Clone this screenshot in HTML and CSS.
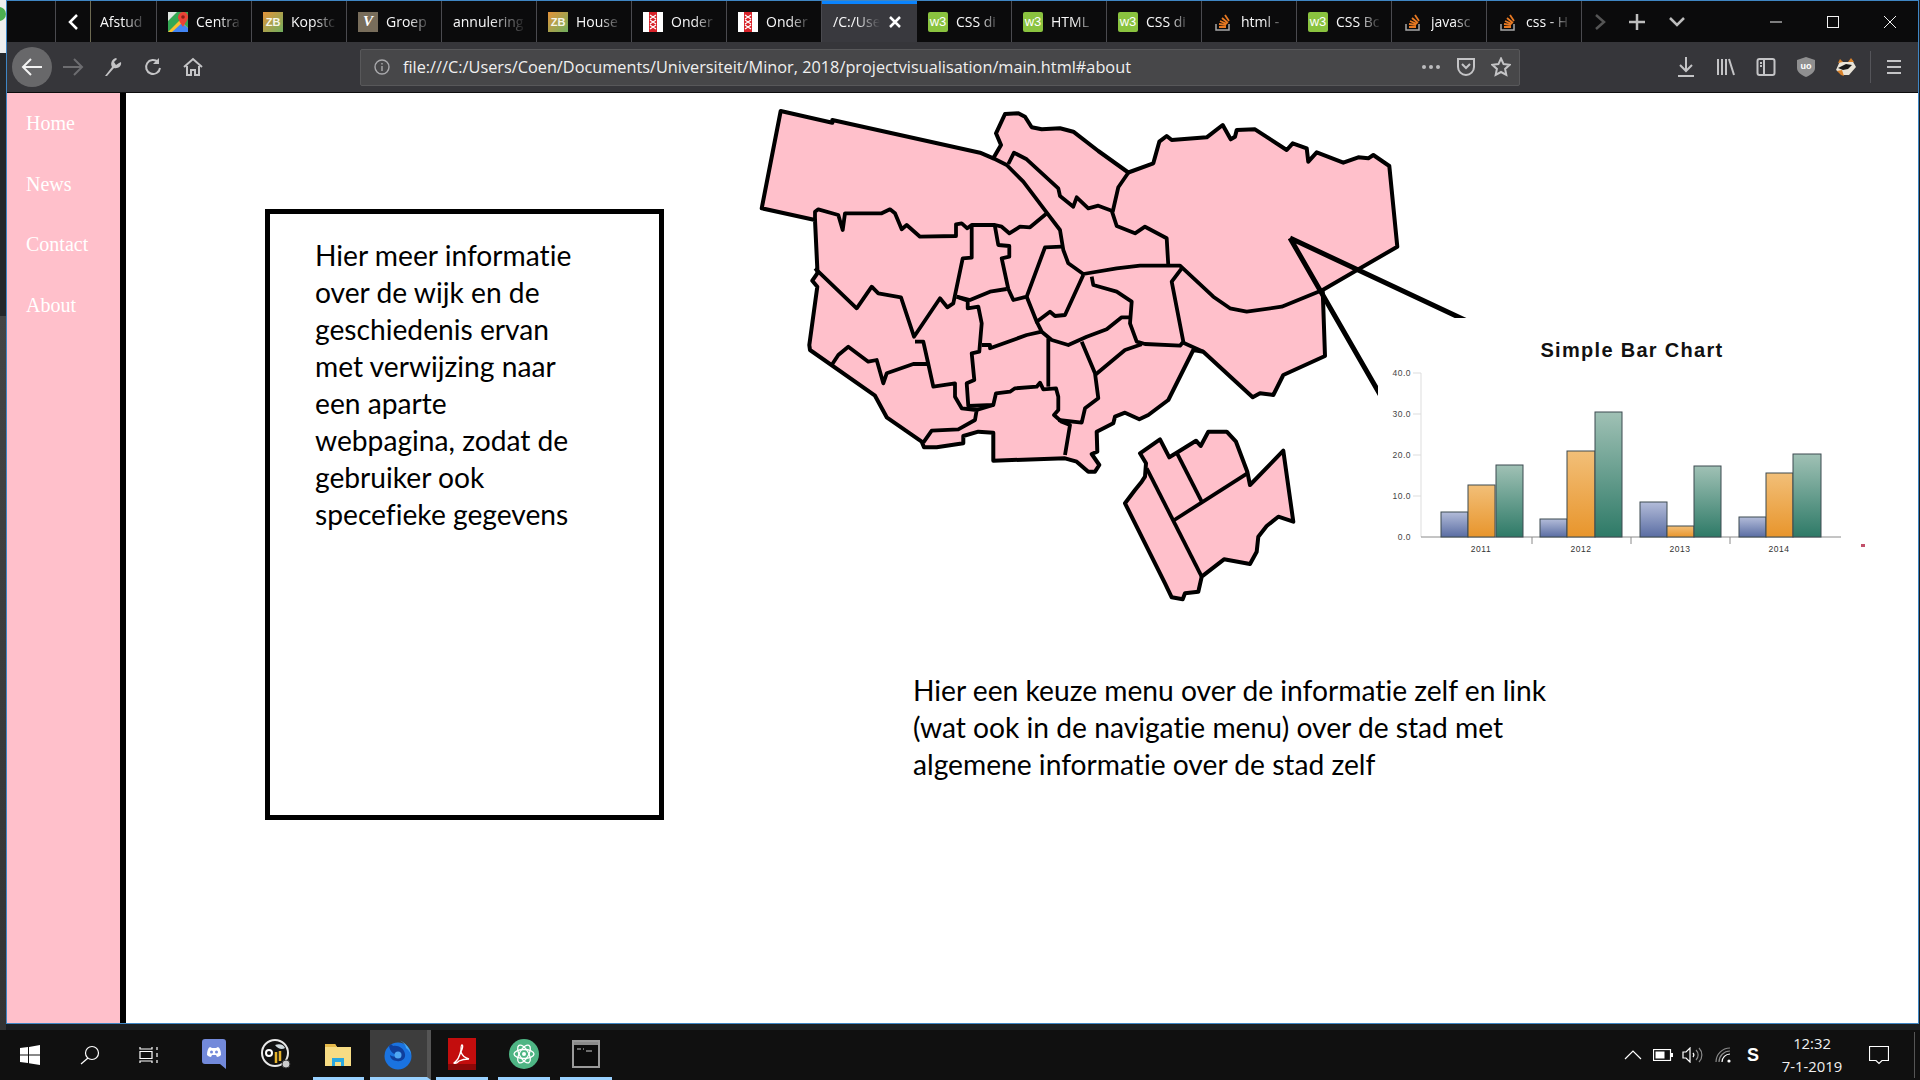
FILE: index.html
```html
<!DOCTYPE html>
<html>
<head>
    <meta charset="utf-8">
    <title>projectvisualisation</title>
    <link rel="stylesheet" href="styles.css">
</head>
<body>
<div class="screen">
    <div class="desk-left"><span class="desk-blob"></span></div>
    <div class="window">
        <!-- tabs -->
        <div class="tabbar">
            <div class="tab-space"></div>
            <div class="tab-scroll"><svg width="14" height="18" viewBox="0 0 14 18"><path d="M11 2 4 9l7 7" class="ic-white"/></svg></div>
            <div class="tab tab-cut"><span class="tab-title">Afstud</span></div>
            <div class="tab">
                <svg class="fav" viewBox="0 0 20 20"><rect width="20" height="20" fill="#34a853"/><path d="M0 20 12 8l8 8v4z" fill="#fbc02d"/><path d="M4 20 14 11l6 5v4z" fill="#4285f4"/><path d="M0 0h9L0 9z" fill="#dfe6e0"/><path d="M15 0c3 0 5 2 5 5 0 3-3 6-5 10-2-3-4-6-5-9 0-3 2-6 5-6z" fill="#ea4335"/><circle cx="15" cy="5" r="1.800" fill="#8a1f17"/></svg>
                <span class="tab-title">Centra</span>
            </div>
            <div class="tab"><span class="fav fav-zb">ZB</span><span class="tab-title">Kopstc</span></div>
            <div class="tab"><span class="fav fav-v">V</span><span class="tab-title">Groep</span></div>
            <div class="tab tab-plain"><span class="tab-title">annulering</span></div>
            <div class="tab"><span class="fav fav-zb">ZB</span><span class="tab-title">House</span></div>
            <div class="tab">
                <svg class="fav" viewBox="0 0 20 20"><rect width="20" height="20" fill="#fff"/><rect x="6" width="8" height="20" fill="#d8232a"/><path d="M7 3l6 4M13 3 7 7M7 8l6 4m0-4-6 4M7 13l6 4m0-4-6 4" class="ic-cross"/></svg>
                <span class="tab-title">Onder</span>
            </div>
            <div class="tab">
                <svg class="fav" viewBox="0 0 20 20"><rect width="20" height="20" fill="#fff"/><rect x="6" width="8" height="20" fill="#d8232a"/><path d="M7 3l6 4M13 3 7 7M7 8l6 4m0-4-6 4M7 13l6 4m0-4-6 4" class="ic-cross"/></svg>
                <span class="tab-title">Onder</span>
            </div>
            <div class="tab tab-on">
                <span class="tab-title">/C:/Use</span>
                <svg width="14" height="14" viewBox="0 0 14 14"><path d="M2 2l10 10M12 2 2 12" class="ic-white"/></svg>
            </div>
            <div class="tab"><span class="fav fav-w3">w3</span><span class="tab-title">CSS di</span></div>
            <div class="tab"><span class="fav fav-w3">w3</span><span class="tab-title">HTML</span></div>
            <div class="tab"><span class="fav fav-w3">w3</span><span class="tab-title">CSS di</span></div>
            <div class="tab">
                <svg class="fav" viewBox="0 0 20 20"><path d="M3 12v6h13v-6" class="ic-so-tray"/><path d="M6 15h7M6 12l7 1M7 9l7 3M9 6l6 5M12 3l4 6" class="ic-so"/></svg>
                <span class="tab-title">html -</span>
            </div>
            <div class="tab"><span class="fav fav-w3">w3</span><span class="tab-title">CSS Bc</span></div>
            <div class="tab">
                <svg class="fav" viewBox="0 0 20 20"><path d="M3 12v6h13v-6" class="ic-so-tray"/><path d="M6 15h7M6 12l7 1M7 9l7 3M9 6l6 5M12 3l4 6" class="ic-so"/></svg>
                <span class="tab-title">javasc</span>
            </div>
            <div class="tab">
                <svg class="fav" viewBox="0 0 20 20"><path d="M3 12v6h13v-6" class="ic-so-tray"/><path d="M6 15h7M6 12l7 1M7 9l7 3M9 6l6 5M12 3l4 6" class="ic-so"/></svg>
                <span class="tab-title">css - H</span>
            </div>
            <div class="tab-btn tab-btn-a"><svg width="12" height="18" viewBox="0 0 12 18"><path d="M2 2l8 7-8 7" class="ic-dim"/></svg></div>
            <div class="tab-btn tab-btn-b"><svg width="18" height="18" viewBox="0 0 18 18"><path d="M9 1v16M1 9h16" class="ic-grey"/></svg></div>
            <div class="tab-btn tab-btn-c"><svg width="16" height="10" viewBox="0 0 16 10"><path d="M1 1l7 7 7-7" class="ic-grey"/></svg></div>
            <div class="win-btns">
                <div class="win-btn"><svg width="12" height="12" viewBox="0 0 12 12"><path d="M0 6h12" class="ic-thin"/></svg></div>
                <div class="win-btn"><svg width="12" height="12" viewBox="0 0 12 12"><rect x=".5" y=".5" width="11" height="11" class="ic-thin"/></svg></div>
                <div class="win-btn"><svg width="14" height="14" viewBox="0 0 14 14"><path d="M1 1l12 12M13 1 1 13" class="ic-thin"/></svg></div>
            </div>
        </div>

        <!-- toolbar -->
        <div class="toolbar">
            <div class="tool tool-back"><svg width="22" height="20" viewBox="0 0 22 20"><path d="M10 2 2 10l8 8M2 10h19" class="ic-light"/></svg></div>
            <div class="tool"><svg width="22" height="20" viewBox="0 0 22 20"><path d="M12 2l8 8-8 8M20 10H1" class="ic-off"/></svg></div>
            <div class="tool"><svg width="20" height="20" viewBox="0 0 20 20"><path d="M2 19l7-9C7 6 9 2 13 1l1 1-3 3 2 3 3-2 2-1c1 4-3 7-7 6l-7 8z" class="ic-fill"/></svg></div>
            <div class="tool"><svg width="20" height="20" viewBox="0 0 20 20"><path d="M17 11a7 7 0 1 1-2-6" class="ic-tool"/><path d="M16 1v6h-6z" class="ic-fill"/></svg></div>
            <div class="tool"><svg width="20" height="20" viewBox="0 0 20 20"><path d="M1 10l9-8 9 8M4 9v9h4v-5h4v5h4V9" class="ic-tool"/></svg></div>
            <div class="urlbar">
                <svg class="url-info" width="16" height="16" viewBox="0 0 16 16"><circle cx="8" cy="8" r="7" class="ic-url"/><path d="M8 7v5M8 4v1.5" class="ic-url"/></svg>
                <span class="url-text">file:///C:/Users/Coen/Documents/Universiteit/Minor, 2018/projectvisualisation/main.html#about</span>
                <div class="url-actions">
                    <div class="url-btn"><svg width="20" height="6" viewBox="0 0 20 6"><circle cx="3" cy="3" r="2" class="ic-dot"/><circle cx="10" cy="3" r="2" class="ic-dot"/><circle cx="17" cy="3" r="2" class="ic-dot"/></svg></div>
                    <div class="url-btn"><svg width="20" height="20" viewBox="0 0 20 20"><path d="M2 2h16v8a8 8 0 0 1-16 0z" class="ic-tool"/><path d="M6 7l4 4 4-4" class="ic-tool"/></svg></div>
                    <div class="url-btn"><svg width="20" height="20" viewBox="0 0 20 20"><path d="M10 1.5l2.6 5.6 6 .7-4.500 4.100 1.200 6L10 15l-5.300 2.900 1.200-6-4.500-4.100 6-.7z" class="ic-tool"/></svg></div>
                </div>
            </div>
            <div class="tool-group">
                <div class="tool"><svg width="20" height="22" viewBox="0 0 20 22"><path d="M10 1v14M4 9l6 6 6-6" class="ic-tool"/><path d="M2 20h16" class="ic-tool"/></svg></div>
                <div class="tool"><svg width="20" height="20" viewBox="0 0 20 20"><path d="M2 2v16M6 2v16M10 2v16M13 2l5 16" class="ic-tool"/></svg></div>
                <div class="tool"><svg width="20" height="20" viewBox="0 0 20 20"><rect x="1.500" y="2" width="17" height="16" rx="2" class="ic-tool"/><path d="M8 2v16M4 6h2M4 9h2" class="ic-tool"/></svg></div>
                <div class="tool"><svg width="18" height="20" viewBox="0 0 18 20"><path d="M9 0l9 3v8c0 4-4 7-9 9-5-2-9-5-9-9V3z" fill="#8f8f90"/><text x="9" y="12" class="ublock-text">uo</text></svg></div>
                <div class="tool"><svg width="22" height="20" viewBox="0 0 22 20"><path d="M1 13 5 4l3 1h6l3-2 4 7-7 8H8z" fill="#e9e4d8"/><path d="M3 6l2-4 3 3zM19 5l-3-4-3 4z" fill="#d9822b"/><path d="M3 11l8-4 6 1-4 4-5 1z" fill="#1a1a1a"/><path d="M2 14l4 4 3 1-2-6z" fill="#d9822b"/></svg></div>
                <div class="tool-sep"></div>
                <div class="tool"><svg width="16" height="16" viewBox="0 0 16 16"><path d="M1 2h14M1 8h14M1 14h14" class="ic-tool"/></svg></div>
            </div>
        </div>

        <!-- the page itself -->
        <div class="page">
            <div class="sidenav">
                <a class="nav-link">Home</a>
                <a class="nav-link">News</a>
                <a class="nav-link">Contact</a>
                <a class="nav-link">About</a>
            </div>
            <div class="main">
                <div class="info-box">Hier meer informatie over de wijk en de geschiedenis ervan met verwijzing naar een aparte webpagina, zodat de gebruiker ook specefieke gegevens</div>
                <div class="map-col">
                    <svg class="map" width="760" height="517" viewBox="740 93 760 517">
                        <g class="wijk">
                            <path d="M780.700 111 832.300 122.700V120L980 152.700 993.300 158.300 1001 145 996 133.300 1005 114 1018.300 113.300 1025 116.700 1031.700 127.300 1041.700 129.300 1060 128.300 1073.300 131.700 1098.300 151 1128.300 172.500 1153.300 163.300 1159.300 141.700 1166.700 136 1171.700 140 1206.700 137.300 1222.700 125 1230.700 139.300 1235 136.700 1236.700 130 1255 129.300 1286.700 150 1292.700 143.300 1306.700 148.300 1308.300 161.700 1316.700 152.300 1343.300 162.700 1358.300 157.300 1368.300 158.300 1373.300 155 1389.300 166 1397.300 246.700 1322.700 290 1325 356 1283.300 375 1273.300 395 1260 393.300 1252.700 397.300 1203.300 351.700 1193.300 350 1178.300 380 1168.300 400 1148.300 415 1139.300 419.300 1125 412.700 1115 416.700 1113.300 423.300 1096.700 431.700 1097.300 451.700 1091.700 454 1099.300 465 1095 471.700 1088.300 471.700 1076.700 461.700 1065 458.300 993.300 460.700V432.700L978.300 431.700 963.300 436V443.300L936.700 447.300H924L921.700 441.700 886.700 417.300 875 395.700 810 350 809.300 345 817.300 286.700 812.300 280.700 817.300 273.300V268.300L815 220 761.700 208.300Z"/>
                            <path d="M1140 453.300 1160 439.300 1169.300 457.300 1178.300 451.700 1196 440.700 1200.700 446 1208.300 431.700H1226.700L1236 441.700 1247.300 471.700 1250 485 1283.300 450.700 1293.300 521.700 1278.300 516.700 1266.700 526 1258.300 536.700 1256.700 551.700 1250 564 1224 559.300 1201.700 576.700 1198.300 591.700 1185 593.300 1182.700 599.300 1171.700 597.300 1165 583.300 1125 503.300 1135 490 1141.700 481.700 1145 476.700 1146 463.300Z"/>
                        </g>
                        <g class="grens">
                            <path d="M815 220V211.700L818.300 209.300 838.300 215 842.700 230 845 213.300H881.700L890 209.300 895 213.300 901.700 229.300 906.700 225 920 236.700 956 236V224.300L961.700 223.300 967.300 228.300 971.700 225H995L1001.700 226.700 1009.300 233.300 1020 226.700 1030 227.300 1046 214"/>
                            <path d="M993.300 158.300 1006.700 165 1023.300 181.700 1046 211.700 1060 230 1063.300 250 1068.300 263.300 1083.300 274 1116.700 268.300 1140 265.700 1180 265.700 1213.300 296.700 1230 308.300 1246.700 311.700 1281.700 306.700 1322.700 290"/>
                            <path d="M1008.300 164 1014 152.700 1026.700 159.300 1058.300 188.300 1060 196 1073.300 206.700 1076.700 197.300 1088.300 208.300 1098.300 205.700 1111.700 210.700 1116.700 226 1135 233.300 1145 226.700 1166.700 238.300 1168.300 265.700"/>
                            <path d="M1112.700 211.700 1118.300 187.300 1128.300 172.700"/>
                            <path d="M815 268.300 856.700 308.300 871.700 286.700 878.300 293.300 901 297.300 914 336.700 940 298.300 947.300 307.300 953.300 303.300 962.700 258.300 971.700 257.700V225"/>
                            <path d="M995 226.700 998.300 245 1009.300 246V256.700L1001.700 258.300 1008.300 289 1013.300 300 1026.700 296.700 1045 247.300 1061.700 246.700"/>
                            <path d="M956.700 296.700 970 300 990 291.700 1006.700 289"/>
                            <path d="M1026.700 296.700 1036.700 321.700 1050 311.700 1055 316 1065 315 1083.300 275"/>
                            <path d="M1036.700 321.700 1041.700 331.700 1051.700 340 1068.300 345 1086.700 336.700 1106.700 329.300 1121.700 317.300H1130"/>
                            <path d="M1091.700 276.700 1093.300 285 1116.700 291.700 1131.700 301.700 1130 323.300 1136.700 341.700 1145 344 1180 345.700 1183.300 341.700 1171.700 281.700 1181.700 268.300"/>
                            <path d="M1183.300 342.700 1203.300 351.700"/>
                            <path d="M1095 375 1125 350 1141.700 344.300"/>
                            <path d="M915 341.700H923.300L928.300 364 933.300 386.700 955 383.300V396.700L961.700 408.300 976.700 410 975 420 958.300 429.300 931.700 430.700 923.300 442.700"/>
                            <path d="M831.700 365 838.300 355 848.300 346.700 868.300 361.700 876.700 360 883.300 383.300 886.700 373.300 913.300 364H928.300"/>
                            <path d="M956.700 296.700 967.700 300.700V308.300L978.300 306.700 981.700 323.300 979.300 351.700 971.700 353.300 974.300 380 966.700 383.300 968.300 406 993.300 405 996 393.300 1010 391.700 1015 388.300 1036.700 386.700 1040 382.700 1043.300 389.300 1056 388.300 1058.300 396.700V410L1054 415 1061.700 421.700 1070 425 1065 455"/>
                            <path d="M976.700 410 993.300 405"/>
                            <path d="M981.700 345H990V348.300L1026.700 335 1041.700 331.700"/>
                            <path d="M1048.300 338.300V386.700"/>
                            <path d="M1058.300 420 1081.700 422.700 1085 408.300 1098.300 398.300 1095 373.300 1081.700 341.700"/>
                            <path d="M1146.700 468.300 1201.700 576.700"/>
                            <path d="M1174.300 520 1247.300 473.300"/>
                            <path d="M1176.700 452.700 1201.700 501.700"/>
                        </g>
                        <path class="pijl" d="M1290 238 1550 360M1290 238 1420 464"/>
                    </svg>
                    <svg class="chart" width="502" height="250" viewBox="1378 318 502 250">
                        <defs>
                            <linearGradient id="barBlue" x1="0" y1="0" x2="0" y2="1"><stop offset="0" stop-color="#b3bcd9"/><stop offset="1" stop-color="#5a6da3"/></linearGradient>
                            <linearGradient id="barOrange" x1="0" y1="0" x2="0" y2="1"><stop offset="0" stop-color="#f2bf78"/><stop offset="1" stop-color="#e8952c"/></linearGradient>
                            <linearGradient id="barGreen" x1="0" y1="0" x2="0" y2="1"><stop offset="0" stop-color="#a0c1b5"/><stop offset="1" stop-color="#2e7a67"/></linearGradient>
                        </defs>
                        <text x="1632" y="357" class="chart-title">Simple Bar Chart</text>
                        <path d="M1413 373h8M1413 414h8M1413 455h8M1413 496h8M1421 373v164" class="axis-light"/>
                        <path d="M1421 537H1841M1532 537v7M1631 537v7M1730 537v7" class="axis"/>
                        <text x="1411" y="376" class="tick-y">40.0</text>
                        <text x="1411" y="417" class="tick-y">30.0</text>
                        <text x="1411" y="458" class="tick-y">20.0</text>
                        <text x="1411" y="499" class="tick-y">10.0</text>
                        <text x="1411" y="540" class="tick-y">0.0</text>
                        <text x="1481" y="552" class="tick-x">2011</text>
                        <text x="1581" y="552" class="tick-x">2012</text>
                        <text x="1680" y="552" class="tick-x">2013</text>
                        <text x="1779" y="552" class="tick-x">2014</text>
                        <g class="bars">
                            <rect x="1441" y="512" width="27" height="25" fill="url(#barBlue)"/>
                            <rect x="1468" y="485" width="27" height="52" fill="url(#barOrange)"/>
                            <rect x="1496" y="465" width="27" height="72" fill="url(#barGreen)"/>
                            <rect x="1540" y="519" width="27" height="18" fill="url(#barBlue)"/>
                            <rect x="1567" y="451" width="28" height="86" fill="url(#barOrange)"/>
                            <rect x="1595" y="412" width="27" height="125" fill="url(#barGreen)"/>
                            <rect x="1640" y="502" width="27" height="35" fill="url(#barBlue)"/>
                            <rect x="1667" y="526" width="27" height="11" fill="url(#barOrange)"/>
                            <rect x="1694" y="466" width="27" height="71" fill="url(#barGreen)"/>
                            <rect x="1739" y="517" width="27" height="20" fill="url(#barBlue)"/>
                            <rect x="1766" y="473" width="27" height="64" fill="url(#barOrange)"/>
                            <rect x="1793" y="454" width="28" height="83" fill="url(#barGreen)"/>
                        </g>
                        <rect x="1861" y="544" width="4" height="3" fill="#c2506a"/>
                    </svg>
                    <p class="menu-text">Hier een keuze menu over de informatie zelf en link (wat ook in de navigatie menu) over de stad met algemene informatie over de stad zelf</p>
                </div>
            </div>
        </div>
    </div>
    <div class="desk-right"></div>
</div>

<!-- windows taskbar -->
<div class="taskbar">
    <div class="sys-btn"><svg width="20" height="20" viewBox="0 0 20 20"><path d="M0 3l8-1v7.500H0zM9 1.900 20 0v9.500H9zM0 10.500h8V18l-8-1zM9 10.500h11V20L9 18.200z" fill="#fff"/></svg></div>
    <div class="sys-btn"><svg width="20" height="20" viewBox="0 0 20 20"><circle cx="12" cy="8" r="6.500" class="ic-task"/><path d="M8 13 1 19" class="ic-task"/></svg></div>
    <div class="sys-btn sys-view"><svg width="20" height="20" viewBox="0 0 20 20"><path d="M1 2v2h12V2M1 18v-2h12v2M1 6.500h12v7H1z" class="ic-task"/><path d="M18 2v3M18 8v4M18 15v3" class="ic-task"/></svg></div>
    <div class="task-list">
        <div class="task"><svg width="24" height="30" viewBox="0 0 24 30"><path d="M3 0h18a3 3 0 0 1 3 3v27l-6-5H3a3 3 0 0 1-3-3V3a3 3 0 0 1 3-3z" fill="#7289da"/><path d="M5 16c0-4 1-7 3-8l2 1h4l2-1c2 1 3 4 3 8-1 1-3 2-4 2l-1-2h-4l-1 2c-1 0-3-1-4-2z" fill="#fff"/><circle cx="9.500" cy="13" r="1.500" fill="#7289da"/><circle cx="14.500" cy="13" r="1.500" fill="#7289da"/></svg></div>
        <div class="task"><svg width="30" height="32" viewBox="0 0 30 32"><circle cx="14" cy="15" r="13" fill="#111" stroke="#e8e8e8" stroke-width="2"/><circle cx="8" cy="15" r="4" fill="#fff"/><circle cx="8" cy="15" r="2" fill="#111"/><path d="M14 7c5-2 9 0 10 3-3 2-7 1-10-3z" fill="#cfd8dc"/><path d="M15 14v11M19 13v10" stroke="#e5b22b" stroke-width="2.500"/><circle cx="25" cy="26" r="4" fill="#ccc" stroke="#333"/></svg></div>
        <div class="task"><svg width="28" height="28" viewBox="0 0 28 28"><path d="M1 4h10l2 3h14v19H1z" fill="#f7dc84"/><path d="M1 4h10l2 3H1z" fill="#e5b94a"/><path d="M8 18h12v8h-3v-4h-6v4H8z" fill="#2aa8e0"/></svg></div>
        <div class="task task-on"><svg width="28" height="32" viewBox="0 0 28 32"><circle cx="14" cy="18" r="13.500" fill="#1a73e0"/><path d="M15 2c7 3 12 9 12 16 0-3-2-6-5-8 0-3-3-6-7-8z" fill="#45a9f5"/><path d="M5 8c2-2 3-2 4 0 5-1 11 2 12 8 1 5-4 8-8 7-4 0-7-3-7-6 3 2 7 2 9 0-5 0-9-3-10-9z" fill="#0f3f9c"/><circle cx="14" cy="17" r="3.500" fill="#4fa6f2"/></svg></div>
        <div class="task"><svg width="28" height="32" viewBox="0 0 28 32"><rect width="28" height="32" fill="#c30d0d"/><rect y="26" width="28" height="6" fill="#8c0808"/><path d="M6 25c3-2 6-8 7-13 0-3 0-5 1-5s1 3-1 7c1 3 4 6 8 7-4 0-8 1-10 2-2 2-4 3-5 2z" class="ic-pdf"/></svg></div>
        <div class="task"><svg width="30" height="30" viewBox="0 0 30 30"><circle cx="15" cy="15" r="15" fill="#4eb584"/><g class="ic-atom"><ellipse cx="15" cy="15" rx="10" ry="4.500"/><ellipse cx="15" cy="15" rx="10" ry="4.500" transform="rotate(60 15 15)"/><ellipse cx="15" cy="15" rx="10" ry="4.500" transform="rotate(120 15 15)"/></g><circle cx="15" cy="15" r="2" fill="#fff"/></svg></div>
        <div class="task"><svg width="28" height="28" viewBox="0 0 28 28"><rect x="1" y="1" width="26" height="26" fill="#0c0c0c" stroke="#9a9a9a" stroke-width="2"/><rect x="2" y="2" width="24" height="3" fill="#8a8a8a"/><path d="M5 9h4M11 9h1M14 11h6" stroke="#ccc"/></svg></div>
    </div>
    <div class="tray">
        <div class="tray-item tray-up"><svg width="18" height="10" viewBox="0 0 18 10"><path d="M1 9l8-8 8 8" class="ic-task"/></svg></div>
        <div class="tray-item"><svg width="20" height="12" viewBox="0 0 20 12"><rect x=".5" y=".5" width="17" height="11" class="ic-task"/><rect x="2.500" y="2.500" width="9" height="7" fill="#fff"/><rect x="18" y="4" width="2" height="4" fill="#fff"/></svg></div>
        <div class="tray-item"><svg width="22" height="16" viewBox="0 0 22 16"><path d="M1 5h3l4-4v14l-4-4H1z" class="ic-task"/><path d="M11 6a3 3 0 0 1 0 4" class="ic-task"/><path d="M14 3a7 7 0 0 1 0 10M17 1a10 10 0 0 1 0 14" class="ic-tray-dim"/></svg></div>
        <div class="tray-item"><svg width="17" height="16" viewBox="0 0 17 16"><path d="M1 15A14 14 0 0 1 15 1M4 15A11 11 0 0 1 15 4" class="ic-tray-dim"/><path d="M7 15a8 8 0 0 1 8-8" class="ic-task"/><circle cx="14" cy="14" r="1.600" fill="#fff"/></svg></div>
        <div class="tray-item tray-s">S</div>
        <div class="clock"><span>12:32</span><span>7-1-2019</span></div>
        <div class="tray-item tray-note"><svg width="20" height="20" viewBox="0 0 20 20"><path d="M.5 1.500h19v14H13l-3 3-3-3H.5z" class="ic-task"/></svg></div>
        <div class="show-desk"></div>
    </div>
</div>
</body>
</html>
```

FILE: styles.css
```css
*{box-sizing:border-box;margin:0;padding:0;}
html,body{width:1920px;height:1080px;overflow:hidden;background:#1c1f22;}
svg{display:block;flex:none;}

/* desktop + browser window */
.screen{display:flex;height:1030px;}
.desk-left{width:6px;background:linear-gradient(#eee 0,#eee 53px,#25272a 53px,#25272a 316px,#444 316px,#333 100%);overflow:hidden;}
.desk-blob{display:block;width:14px;height:14px;margin:7px 0 0 -8px;border-radius:50%;background:#4caf50;}
.desk-right{width:1px;background:#1c1f22;}
.window{width:1913px;height:1024px;border:1px solid #3f86c4;display:flex;flex-direction:column;}

.tabbar{height:41px;background:#0b0b0c;display:flex;color:#f9f9fa;font:14px "Open Sans",sans-serif;}
.tab-space{width:49px;border-right:1px solid #4a4a4f;}
.tab-scroll{width:35px;display:flex;align-items:center;justify-content:center;border-right:1px solid #6d6a52;}
.tab{width:95px;flex:none;display:flex;align-items:center;gap:8px;padding:0 9px 0 11px;border-right:1px solid #4a4a4f;}
.tab-cut{width:66px;padding-left:9px;}
.tab-plain{padding-left:11px;}
.tab-on{background:#39393e;border-top:3px solid #0a84ff;border-right:0;padding-right:15px;}
.tab-on svg{margin-top:-3px;}
.tab-on .tab-title{margin-top:-3px;}
.tab-title{flex:1;overflow:hidden;white-space:nowrap;-webkit-mask-image:linear-gradient(to right,#000 50%,transparent 100%);mask-image:linear-gradient(to right,#000 50%,transparent 100%);}
.fav{width:20px;height:20px;flex:none;display:flex;align-items:center;justify-content:center;font-family:"Liberation Sans",sans-serif;}
.fav-zb{background:linear-gradient(135deg,#e5933a,#6fae5e);color:#f5f5e8;font-size:11px;font-weight:bold;}
.fav-v{background:#786d5b;color:#fff;font:italic bold 15px "Liberation Serif",serif;}
.fav-w3{background:#8ac33f;border-radius:2px;color:#fff;font-size:13px;}
.tab-btn{display:flex;align-items:center;justify-content:center;}
.tab-btn-a{width:36px;}
.tab-btn-b{width:38px;}
.tab-btn-c{width:42px;}
.win-btns{margin-left:auto;display:flex;}
.win-btn{width:57px;display:flex;align-items:center;justify-content:center;}

.ic-white{fill:none;stroke:#fff;stroke-width:2.500;}
.ic-cross{fill:none;stroke:#fff;stroke-width:1.200;}
.ic-so{fill:none;stroke:#e87922;stroke-width:1.800;}
.ic-so-tray{fill:none;stroke:#a8a8a8;stroke-width:1.500;}
.ic-dim{fill:none;stroke:#555;stroke-width:2.500;}
.ic-grey{fill:none;stroke:#bdbdbd;stroke-width:2.500;}
.ic-thin{fill:none;stroke:#f2f2f2;stroke-width:1;}
.ic-light{fill:none;stroke:#f2f2f2;stroke-width:2;}
.ic-off{fill:none;stroke:#6d6d70;stroke-width:2;}
.ic-tool{fill:none;stroke:#c4c4c6;stroke-width:2;}
.ic-fill{fill:#c4c4c6;}
.ic-url{fill:none;stroke:#a9a9ac;stroke-width:1.400;}
.ic-dot{fill:#bcbcbe;}
.ublock-text{font:bold 9px "Liberation Sans",sans-serif;fill:#fff;text-anchor:middle;}

.toolbar{height:51px;flex:none;background:#36363a;border-bottom:1px solid #0c0c0d;display:flex;align-items:center;padding-left:5px;}
.tool{width:40px;height:40px;flex:none;display:flex;align-items:center;justify-content:center;}
.tool-back{background:#68686a;border-radius:50%;margin-right:1px;}
.urlbar{width:1160px;height:37px;margin:0 0 0 147px;background:#474749;border:1px solid #58585a;border-radius:2px;display:flex;align-items:center;}
.url-info{margin-left:13px;}
.url-text{margin-left:13px;color:#f0f0f0;font:16.300px "Open Sans",sans-serif;white-space:nowrap;}
.url-actions{margin-left:auto;display:flex;margin-right:1px;}
.url-btn{width:35px;display:flex;justify-content:center;align-items:center;}
.tool-group{display:flex;align-items:center;margin-left:146px;}
.tool-sep{width:1px;height:32px;margin:0 3px 0 4px;background:#55555a;}

/* page */
.page{height:930px;flex:none;background:#fff;display:flex;overflow:hidden;}
.sidenav{width:119px;flex:none;background:#ffc0cb;border-right:6px solid #000;}
.nav-link{display:block;padding:19px 0 18.700px 19px;color:#fff;font:20px/23px "Liberation Serif",serif;}
.main{flex:1;display:flex;align-items:flex-start;}
.info-box{width:399px;height:611px;margin:116px 0 0 139px;padding:23px 70px 0 45px;border:5px solid #000;color:#000;font:28.200px/37px Lato,sans-serif;font-variant-ligatures:none;}
.map-col{position:relative;margin-left:76px;}
.map{overflow:hidden;}
.wijk path{fill:#ffc0cb;stroke:#000;stroke-width:4;stroke-linejoin:round;}
.grens path{fill:none;stroke:#000;stroke-width:3.800;stroke-linejoin:round;}
.pijl{fill:none;stroke:#000;stroke-width:5;}
.chart{position:absolute;left:638px;top:225px;background:#fff;}
.chart-title{font:bold 20px "Liberation Sans",sans-serif;letter-spacing:1.300px;text-anchor:middle;fill:#111;}
.axis-light{fill:none;stroke:#ddd;}
.axis{fill:none;stroke:#8a8a8a;}
.tick-y{font:8.500px "Liberation Sans",sans-serif;letter-spacing:.5px;text-anchor:end;fill:#444;}
.tick-x{font:8.500px "Liberation Sans",sans-serif;letter-spacing:.5px;text-anchor:middle;fill:#333;}
.bars rect{stroke:#3c4a50;stroke-width:1;}
.menu-text{width:660px;margin:62px 0 0 173px;color:#000;font:28.200px/37px Lato,sans-serif;font-variant-ligatures:none;}

/* taskbar */
.taskbar{height:50px;background:#101010;display:flex;align-items:stretch;color:#fff;}
.sys-btn{width:60px;display:flex;align-items:center;justify-content:center;}
.sys-view{width:58px;}
.ic-task{fill:none;stroke:#fff;stroke-width:1.200;}
.ic-tray-dim{fill:none;stroke:#8b8b8b;stroke-width:1.200;}
.ic-pdf{fill:none;stroke:#fff;stroke-width:1.300;}
.ic-atom ellipse{fill:none;stroke:#fff;stroke-width:1.300;}
.task-list{display:flex;gap:10.500px;margin-left:10.500px;}
.task{width:51.500px;display:flex;align-items:center;justify-content:center;border-bottom:3px solid transparent;}
.task:nth-child(n+3){border-bottom-color:#99d1ff;}
.task-on{width:61px;margin:0 -5px;background:#3d3d3d;border-right:4px solid #555;}
.tray{margin-left:auto;display:flex;align-items:center;}
.tray-item{width:30px;display:flex;justify-content:center;align-items:center;}
.tray-s{font:bold 18px "Liberation Sans",sans-serif;}
.clock{width:92px;margin-left:-2px;margin-right:2px;display:flex;flex-direction:column;align-items:center;gap:4px;font:14.800px/19px "Open Sans",sans-serif;color:#f0f0f0;}
.tray-note{width:36px;margin-left:1px;}
.show-desk{width:1px;height:46px;margin-left:17px;margin-right:5px;background:#555;}
```
